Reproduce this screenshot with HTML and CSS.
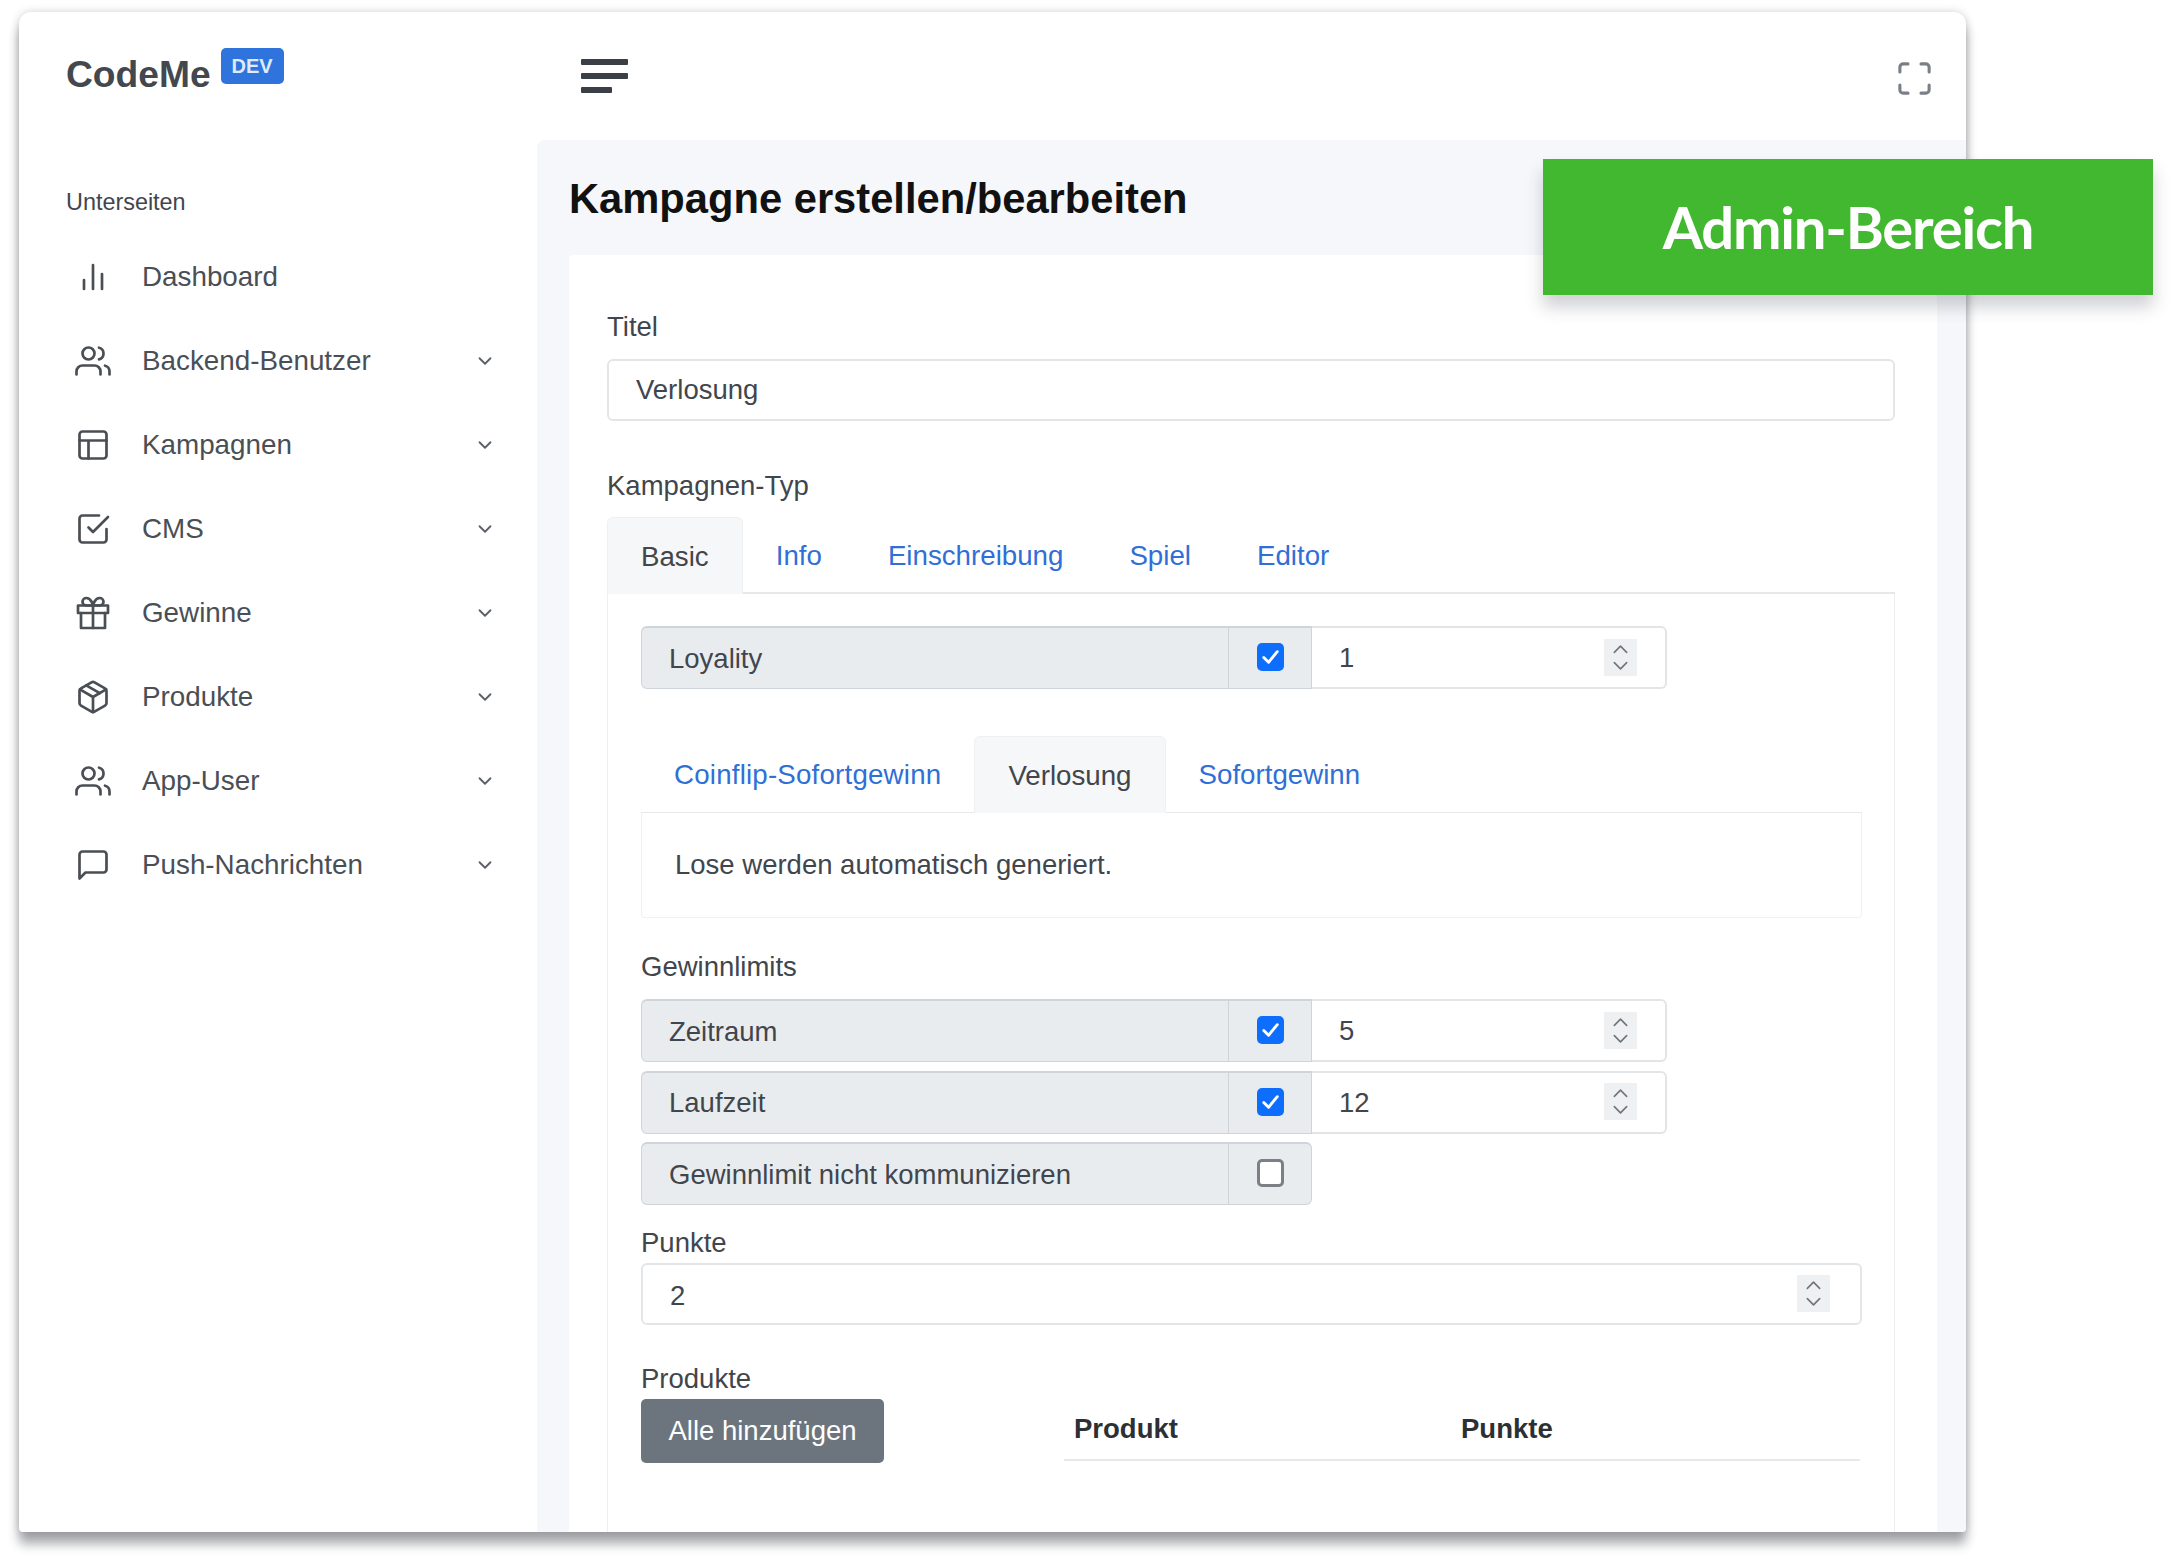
FILE: index.html
```html
<!DOCTYPE html>
<html lang="de">
<head>
    <meta charset="UTF-8">
    <title>CodeMe Admin</title>
    <link rel="stylesheet" href="styles.css">
</head>
<body>
    <svg class="sprites" xmlns="http://www.w3.org/2000/svg">
        <symbol id="i-bars" viewBox="0 0 24 24"><path d="M18 20V10M12 20V4M6 20v-6"/></symbol>
        <symbol id="i-users" viewBox="0 0 24 24"><path d="M17 21v-2a4 4 0 0 0-4-4H5a4 4 0 0 0-4 4v2"/><circle cx="9" cy="7" r="4"/><path d="M23 21v-2a4 4 0 0 0-3-3.87M16 3.13a4 4 0 0 1 0 7.75"/></symbol>
        <symbol id="i-layout" viewBox="0 0 24 24"><rect x="3" y="3" width="18" height="18" rx="2"/><path d="M3 9h18M9 21V9"/></symbol>
        <symbol id="i-check" viewBox="0 0 24 24"><path d="M9 11l3 3L22 4"/><path d="M21 12v7a2 2 0 0 1-2 2H5a2 2 0 0 1-2-2V5a2 2 0 0 1 2-2h11"/></symbol>
        <symbol id="i-gift" viewBox="0 0 24 24"><path d="M20 12v10H4V12"/><rect x="2" y="7" width="20" height="5"/><path d="M12 22V7M12 7H7.5a2.5 2.5 0 0 1 0-5C11 2 12 7 12 7zM12 7h4.5a2.5 2.5 0 0 0 0-5C13 2 12 7 12 7z"/></symbol>
        <symbol id="i-package" viewBox="0 0 24 24"><path d="M16.5 9.4L7.5 4.21"/><path d="M21 16V8a2 2 0 0 0-1-1.73l-7-4a2 2 0 0 0-2 0l-7 4A2 2 0 0 0 3 8v8a2 2 0 0 0 1 1.73l7 4a2 2 0 0 0 2 0l7-4A2 2 0 0 0 21 16z"/><path d="M3.27 6.96L12 12.01l8.73-5.05M12 22.08V12"/></symbol>
        <symbol id="i-message" viewBox="0 0 24 24"><path d="M21 15a2 2 0 0 1-2 2H7l-4 4V5a2 2 0 0 1 2-2h14a2 2 0 0 1 2 2z"/></symbol>
        <symbol id="i-chevron" viewBox="0 0 24 24"><path d="M6 9l6 6 6-6"/></symbol>
        <symbol id="i-spin" viewBox="0 0 32 36"><path d="M10 13l6-6 6 6M10 23l6 6 6-6"/></symbol>
        <symbol id="i-tick" viewBox="0 0 28 28"><path d="M7 14.5l5 5 9-11"/></symbol>
    </svg>

    <div class="window">
        <aside class="sidebar">
            <div class="logo">CodeMe <span class="logo-badge">DEV</span></div>
            <div class="nav-title">Unterseiten</div>
            <nav>
                <a class="nav-item"><svg class="nav-icon"><use href="#i-bars"/></svg><span class="nav-label">Dashboard</span></a>
                <a class="nav-item"><svg class="nav-icon"><use href="#i-users"/></svg><span class="nav-label">Backend-Benutzer</span><svg class="nav-chevron"><use href="#i-chevron"/></svg></a>
                <a class="nav-item"><svg class="nav-icon"><use href="#i-layout"/></svg><span class="nav-label">Kampagnen</span><svg class="nav-chevron"><use href="#i-chevron"/></svg></a>
                <a class="nav-item"><svg class="nav-icon"><use href="#i-check"/></svg><span class="nav-label">CMS</span><svg class="nav-chevron"><use href="#i-chevron"/></svg></a>
                <a class="nav-item"><svg class="nav-icon"><use href="#i-gift"/></svg><span class="nav-label">Gewinne</span><svg class="nav-chevron"><use href="#i-chevron"/></svg></a>
                <a class="nav-item"><svg class="nav-icon"><use href="#i-package"/></svg><span class="nav-label">Produkte</span><svg class="nav-chevron"><use href="#i-chevron"/></svg></a>
                <a class="nav-item"><svg class="nav-icon"><use href="#i-users"/></svg><span class="nav-label">App-User</span><svg class="nav-chevron"><use href="#i-chevron"/></svg></a>
                <a class="nav-item"><svg class="nav-icon"><use href="#i-message"/></svg><span class="nav-label">Push-Nachrichten</span><svg class="nav-chevron"><use href="#i-chevron"/></svg></a>
            </nav>
        </aside>

        <div class="main">
            <header class="topbar">
                <div class="hamburger"><span></span><span></span><span class="short"></span></div>
                <svg class="fullscreen" viewBox="0 0 24 24"><path d="M8 3H5a2 2 0 0 0-2 2v3M21 8V5a2 2 0 0 0-2-2h-3M16 21h3a2 2 0 0 0 2-2v-3M3 16v3a2 2 0 0 0 2 2h3"/></svg>
            </header>

            <main class="content">
                <h1 class="page-title">Kampagne erstellen/bearbeiten</h1>
                <div class="card">
                    <div class="label label-first">Titel</div>
                    <div class="input input-title">Verlosung</div>

                    <div class="label label-type">Kampagnen-Typ</div>
                    <div class="tabs">
                        <a class="tab active">Basic</a>
                        <a class="tab">Info</a>
                        <a class="tab">Einschreibung</a>
                        <a class="tab">Spiel</a>
                        <a class="tab">Editor</a>
                    </div>

                    <div class="pane">
                        <div class="group">
                            <div class="group-label">Loyality</div>
                            <div class="group-check"><span class="checkbox checked"><svg><use href="#i-tick"/></svg></span></div>
                            <div class="group-input">1<svg class="spin"><use href="#i-spin"/></svg></div>
                        </div>

                        <div class="tabs tabs-inner">
                            <a class="tab tab-coinflip">Coinflip-Sofortgewinn</a>
                            <a class="tab active">Verlosung</a>
                            <a class="tab">Sofortgewinn</a>
                        </div>
                        <div class="tab-box">Lose werden automatisch generiert.</div>

                        <div class="label label-limits">Gewinnlimits</div>
                        <div class="group-stack">
                            <div class="group">
                                <div class="group-label">Zeitraum</div>
                                <div class="group-check"><span class="checkbox checked"><svg><use href="#i-tick"/></svg></span></div>
                                <div class="group-input">5<svg class="spin"><use href="#i-spin"/></svg></div>
                            </div>
                            <div class="group">
                                <div class="group-label">Laufzeit</div>
                                <div class="group-check"><span class="checkbox checked"><svg><use href="#i-tick"/></svg></span></div>
                                <div class="group-input">12<svg class="spin"><use href="#i-spin"/></svg></div>
                            </div>
                            <div class="group group-short">
                                <div class="group-label">Gewinnlimit nicht kommunizieren</div>
                                <div class="group-check"><span class="checkbox"></span></div>
                            </div>
                        </div>

                        <div class="label label-points">Punkte</div>
                        <div class="input input-points"><span class="input-value">2</span><svg class="spin"><use href="#i-spin"/></svg></div>

                        <div class="label label-products">Produkte</div>
                        <div class="products">
                            <button class="btn" type="button">Alle hinzufügen</button>
                            <div class="products-head">
                                <span>Produkt</span>
                                <span>Punkte</span>
                            </div>
                        </div>
                    </div>
                </div>
            </main>
        </div>
    </div>

    <div class="ribbon">Admin-Bereich</div>
</body>
</html>
```

FILE: styles.css
```css
* {
    box-sizing: border-box;
}
body {
    margin: 0;
    height: 1559px;
    overflow: hidden;
    background-color: #fff;
    color: #41464c;
    font-family: "Liberation Sans", Arial, sans-serif;
    font-size: 27.5px;
}
.sprites {
    display: none;
}
svg {
    fill: none;
    stroke: currentColor;
    stroke-width: 2;
    stroke-linecap: round;
    stroke-linejoin: round;
}

/* frame */
.window {
    display: flex;
    width: 1947px;
    height: 1520px;
    margin: 12px 0 0 19px;
    background-color: #fff;
    border-radius: 12px 12px 4px 4px;
    overflow: hidden;
    box-shadow: 0 0 8px rgba(40, 44, 52, 0.22), 0 12px 11px rgba(40, 44, 52, 0.4);
}

/* sidebar */
.sidebar {
    width: 518px;
    flex-shrink: 0;
    padding-left: 47px;
    padding-right: 41px;
}
.logo {
    display: flex;
    align-items: center;
    height: 124px;
    gap: 10px;
    color: #43484f;
    font-size: 37.2px;
    font-weight: bold;
}
.logo-badge {
    width: 63px;
    height: 36px;
    margin-bottom: 16px;
    border-radius: 5px;
    background-color: #2f74dc;
    color: #dfeafc;
    font-size: 20px;
    line-height: 36px;
    text-align: center;
}
.nav-title {
    margin-top: 50px;
    margin-bottom: 17px;
    font-size: 23.4px;
    line-height: 32px;
}
.nav-item {
    display: flex;
    align-items: center;
    height: 84px;
    color: #4a4f55;
    font-size: 27.8px;
}
.nav-icon {
    width: 36px;
    height: 36px;
    margin-left: 9px;
    margin-right: 31px;
    stroke-width: 1.8;
}
.nav-label {
    flex: 1;
}
.nav-chevron {
    width: 22px;
    height: 22px;
    color: #5b6066;
}

/* main column */
.main {
    flex: 1;
    display: flex;
    flex-direction: column;
    min-width: 0;
}
.topbar {
    display: flex;
    align-items: center;
    justify-content: space-between;
    height: 128px;
    flex-shrink: 0;
    padding-left: 44px;
    padding-right: 32px;
}
.hamburger {
    display: flex;
    flex-direction: column;
    gap: 8px;
    width: 47px;
}
.hamburger span {
    display: block;
    height: 6px;
    border-radius: 1px;
    background-color: #3b4046;
}
.hamburger .short {
    width: 31px;
}
.fullscreen {
    width: 39px;
    height: 39px;
    margin-top: 4px;
    color: #7a7f86;
    stroke-width: 1.9;
}
.content {
    flex: 1;
    display: flex;
    flex-direction: column;
    min-height: 0;
    padding: 35px 29px 0 32px;
    background-color: #f5f7fb;
    border-top-left-radius: 8px;
}
.page-title {
    margin: 0 0 32px;
    color: #111;
    font-size: 41.7px;
    line-height: 48px;
    font-weight: bold;
}
.card {
    flex: 1;
    display: flex;
    flex-direction: column;
    min-height: 0;
    padding: 0 42px 0 38px;
    background-color: #fff;
    border-radius: 4px 4px 0 0;
}

/* form bits */
.label {
    line-height: 32px;
}
.label-first {
    margin-top: 56px;
}
.label-type {
    margin-top: 49px;
}
.label-limits {
    margin-top: 33px;
}
.label-points {
    margin-top: 22px;
}
.label-products {
    margin-top: 38px;
}
.input {
    display: flex;
    align-items: center;
    justify-content: space-between;
    height: 62px;
    padding-right: 30px;
    border: 2px solid #e3e6e9;
    border-radius: 6px;
    background-color: #fff;
}
.input-title {
    margin-top: 16px;
    padding-left: 27px;
}
.input-points {
    margin-top: 4px;
    padding-left: 27px;
}
.input-value {
    padding-top: 3px;
}

/* tabs */
.tabs {
    display: flex;
    height: 77px;
    margin-top: 15px;
    flex-shrink: 0;
    border-bottom: 2px solid #e6e8eb;
    font-size: 27.7px;
}
.tab {
    display: flex;
    align-items: center;
    height: 77px;
    padding: 1px 33px 0;
    color: #2f6fd6;
}
.tab-coinflip {
    letter-spacing: 0.2px;
}
.tab.active {
    background-color: #f6f7f9;
    color: #41464c;
    border-radius: 6px 6px 0 0;
    border: 1px solid #eef0f2;
    border-bottom: 0;
}
.pane {
    flex: 1;
    padding: 32px 32px 0 33px;
    border-left: 1px solid #eceef1;
    border-right: 1px solid #eceef1;
}
.tabs-inner {
    margin-top: 47px;
    border-bottom-width: 1px;
}

/* input groups */
.group {
    display: flex;
    width: 1026px;
    height: 63px;
}
.group-short {
    width: 671px;
}
.group-label {
    display: flex;
    align-items: center;
    width: 588px;
    padding: 1px 0 0 27px;
    background-color: #e9ecef;
    border: 1px solid #ced4da;
    border-top-width: 2px;
    border-radius: 6px 0 0 6px;
}
.group-check {
    display: flex;
    align-items: center;
    justify-content: center;
    width: 83px;
    background-color: #e9ecef;
    border: 1px solid #ced4da;
    border-left: 0;
    border-top-width: 2px;
}
.group-short .group-check {
    border-radius: 0 6px 6px 0;
}
.group-input {
    flex: 1;
    display: flex;
    align-items: center;
    justify-content: space-between;
    padding: 1px 28px 0 27px;
    border: 2px solid #e2e5e8;
    border-left: 0;
    border-radius: 0 6px 6px 0;
    background-color: #fff;
}
.group-stack {
    display: flex;
    flex-direction: column;
    gap: 8.5px;
    margin-top: 16px;
}
.checkbox {
    display: block;
    width: 27px;
    height: 28px;
    margin-top: -2px;
    background-color: #fff;
    border: 3px solid #7b8086;
    border-radius: 5px;
}
.checkbox.checked {
    background-color: #0d6efd;
    border: 0;
    color: #fff;
}
.checkbox svg {
    display: block;
    width: 27px;
    height: 28px;
    stroke-width: 3;
}
.spin {
    width: 33px;
    height: 37px;
    background-color: #eef0f2;
    color: #70757b;
    stroke-width: 1.6;
    margin-top: -2px;
}
.tab-box {
    display: flex;
    align-items: center;
    height: 105px;
    padding-left: 33px;
    border: 1px solid #f0f1f3;
    border-top: 0;
    border-radius: 0 0 4px 4px;
}

/* products */
.products {
    display: flex;
    margin-top: 4px;
}
.btn {
    width: 243px;
    height: 64px;
    border: 0;
    border-radius: 5px;
    background-color: #6c757d;
    color: #fff;
    font: inherit;
}
.products-head {
    display: grid;
    grid-template-columns: 387px 1fr;
    align-items: center;
    width: 796px;
    height: 62px;
    margin-left: 180px;
    padding-left: 10px;
    border-bottom: 2px solid #e6e8eb;
    color: #2c3035;
    font-weight: bold;
}

/* green label over the frame */
.ribbon {
    position: absolute;
    left: 1543px;
    top: 159px;
    width: 610px;
    height: 136px;
    background-color: #42b830;
    box-shadow: 0 12px 16px rgba(40, 44, 60, 0.22);
    color: #fff;
    font-family: Lato, "Open Sans", sans-serif;
    font-size: 58px;
    font-weight: bold;
    letter-spacing: -1.2px;
    line-height: 136px;
    text-align: center;
}
```
